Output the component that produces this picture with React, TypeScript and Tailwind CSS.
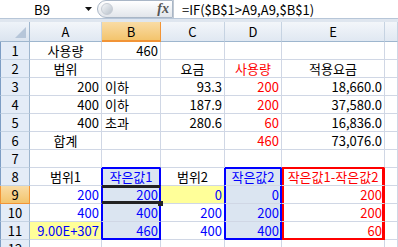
import React from 'react';

type Cell = { t?: string; c?: string };

const W = ['w-[72px]', 'w-[59px]', 'w-[64px]', 'w-[57px]', 'w-[103px]', 'w-[13px]'];

const R = 'justify-end pr-[2px]';
const C = 'justify-center';
const L = 'justify-start pl-[3px]';
const red = 'text-[#ff0000]';
const blue = 'text-[#0000ff]';
const rng = 'bg-[#dbe5f1] text-[#0000ff] border-r-[#0000ff]';
const bMid = `${rng} shadow-[inset_1px_0_0_#0000ff,inset_-1px_0_0_#0000ff]`;
const bTop = `${rng} shadow-[inset_1px_0_0_#0000ff,inset_-1px_0_0_#0000ff,inset_0_1px_0_#0000ff]`;
const bBot = `${rng} border-b-[#0000ff] shadow-[inset_1px_0_0_#0000ff,inset_-1px_0_0_#0000ff,inset_0_-1px_0_#0000ff]`;
const rTop = `${red} border-r-[#ff0000] shadow-[inset_2px_0_0_#ff0000,inset_-2px_0_0_#ff0000,inset_0_1px_0_#ff0000]`;
const rMid = `${red} border-r-[#ff0000] shadow-[inset_2px_0_0_#ff0000,inset_-2px_0_0_#ff0000]`;
const rBot = `${red} border-r-[#ff0000] border-b-[#ff0000] shadow-[inset_2px_0_0_#ff0000,inset_-2px_0_0_#ff0000,inset_0_-1px_0_#ff0000]`;

const rows: Cell[][] = [
  [{ t: '사용량', c: C }, { t: '460', c: R }, {}, {}, {}, {}],
  [{ t: '범위', c: C }, {}, { t: '요금', c: C }, { t: '사용량', c: `${C} ${red}` }, { t: '적용요금', c: C }, {}],
  [{ t: '200', c: R }, { t: '이하', c: L }, { t: '93.3', c: R }, { t: '200', c: `${R} ${red}` }, { t: '18,660.0', c: R }, {}],
  [{ t: '400', c: R }, { t: '이하', c: L }, { t: '187.9', c: R }, { t: '200', c: `${R} ${red}` }, { t: '37,580.0', c: R }, {}],
  [{ t: '400', c: R }, { t: '초과', c: L }, { t: '280.6', c: R }, { t: '60', c: `${R} ${red}` }, { t: '16,836.0', c: R }, {}],
  [{ t: '합계', c: C }, {}, {}, { t: '460', c: `${R} ${red}` }, { t: '73,076.0', c: R }, {}],
  [{}, { c: 'border-b-[#0000ff]' }, {}, { c: 'border-b-[#0000ff]' }, { c: 'border-b-[#ff0000]' }, {}],
  [
    { t: '범위1', c: `${C} border-r-[#0000ff]` },
    { t: '작은값1', c: `${C} ${bTop} border-b-[#222222]` },
    { t: '범위2', c: `${C} border-r-[#0000ff]` },
    { t: '작은값2', c: `${C} ${bTop}` },
    { t: '작은값1-작은값2', c: `${C} ${rTop}` },
    {},
  ],
  [
    { t: '200', c: `${R} ${blue} border-r-[#0000ff]` },
    {
      t: '200',
      c: `${R} bg-[#dbe5f1] text-[#0000ff] border-r-[#0000ff] border-b-[#222222] shadow-[inset_0_2px_0_#222222,inset_0_-2px_0_#222222,inset_1px_0_0_#0000ff,inset_-1px_0_0_#0000ff]`,
    },
    { t: '0', c: `${R} ${blue} bg-[#ffff99] border-r-[#0000ff]` },
    { t: '0', c: `${R} ${bMid}` },
    { t: '200', c: `${R} ${rMid}` },
    {},
  ],
  [
    { t: '400', c: `${R} ${blue} border-r-[#0000ff]` },
    { t: '400', c: `${R} ${bMid}` },
    { t: '200', c: `${R} ${blue} border-r-[#0000ff]` },
    { t: '200', c: `${R} ${bMid}` },
    { t: '200', c: `${R} ${rMid}` },
    {},
  ],
  [
    { t: '9.00E+307', c: `${R} ${blue} bg-[#ffff99] border-r-[#0000ff]` },
    { t: '460', c: `${R} ${bBot}` },
    { t: '400', c: `${R} ${blue} border-r-[#0000ff]` },
    { t: '400', c: `${R} ${bBot}` },
    { t: '60', c: `${R} ${rBot}` },
    {},
  ],
  [{}, {}, {}, {}, {}, {}],
];

const FormulaBar = () => (
  <div className="h-[19px] flex items-center bg-white border-b border-[#b7c6d8]">
    <div className="w-[84px] text-center text-[13px] text-black">B9</div>
    <svg width="7" height="4" viewBox="0 0 7 4" className="ml-[1px]">
      <path d="M0 0h7L3.5 4z" fill="#111" />
    </svg>
    <div className="ml-[5px] h-[18px] w-[76px] rounded-l-full border border-[#a9b6c6] bg-linear-to-b from-white to-[#e2e6eb] flex items-center pl-[3px]">
      <div className="w-[12px] h-[12px] rounded-full bg-linear-to-br from-[#f4f6f8] to-[#b9c2cc] border border-[#c6ccd4]" />
      <span className="ml-auto mr-[3px] italic font-['Liberation_Serif',serif] text-[14px] font-bold text-[#555]">fx</span>
    </div>
    <div className="flex-1 h-full border-l border-[#c0c8d2] pl-[8px] flex items-center text-[13px] text-black whitespace-nowrap">
      =IF($B$1&gt;A9,A9,$B$1)
    </div>
  </div>
);

const App = () => {
  return (
    <div className="w-[398px] h-[247px] overflow-hidden bg-white font-['Noto_Sans_CJK_KR','Noto_Sans',sans-serif] text-[13px] leading-none text-black">
      <FormulaBar />
      <div className="h-[3px] bg-[#dfe6ef]" />
      <div className="flex h-[20px]">
        <div className="w-[30px] shrink-0 relative bg-linear-to-b from-[#eef3f9] to-[#dbe4ef] border-r border-b border-[#9eb6ce]">
          <div className="absolute right-[3px] bottom-[3px] w-0 h-0 border-l-[11px] border-l-transparent border-b-[11px] border-b-[#b6c6d9]" />
        </div>
        {['A', 'B', 'C', 'D', 'E', ''].map((h, i) => (
          <div
            key={i}
            className={`${W[i]} shrink-0 flex items-center justify-center border-r border-b ${
              i === 1
                ? 'bg-linear-to-b from-[#f9dca5] to-[#f3c46c] border-[#f29436] border-b-2'
                : 'bg-linear-to-b from-[#f3f6fa] to-[#e0e8f2] border-r-[#c6d3e2] border-b-[#9eb6ce]'
            }`}
          >
            {h}
          </div>
        ))}
      </div>
      {rows.map((row, ri) => (
        <div key={ri} className="flex h-[18px] shrink-0">
          <div
            className={`w-[30px] shrink-0 flex items-center justify-center border-l border-r border-b ${
              ri === 8
                ? 'bg-linear-to-b from-[#f9dca5] to-[#f3c46c] border-l-[#f29436] border-r-[#f29436] border-b-[#f29436]'
                : 'bg-[#e4ecf7] border-l-[#7d9dc4] border-r-[#9eb6ce] border-b-[#c5d3e3]'
            }`}
          >
            {ri + 1}
          </div>
          {row.map((cell, ci) => (
            <div
              key={ci}
              className={`${W[ci]} shrink-0 relative flex items-center whitespace-nowrap border-r border-b border-[#d0d7e5] ${cell.c ?? ''}`}
            >
              {cell.t}
              {ri === 8 && ci === 1 && (
                <div className="absolute right-[-3px] bottom-[-3px] w-[5px] h-[5px] bg-[#222222] z-10" />
              )}
            </div>
          ))}
        </div>
      ))}
    </div>
  );
};

export default App;
